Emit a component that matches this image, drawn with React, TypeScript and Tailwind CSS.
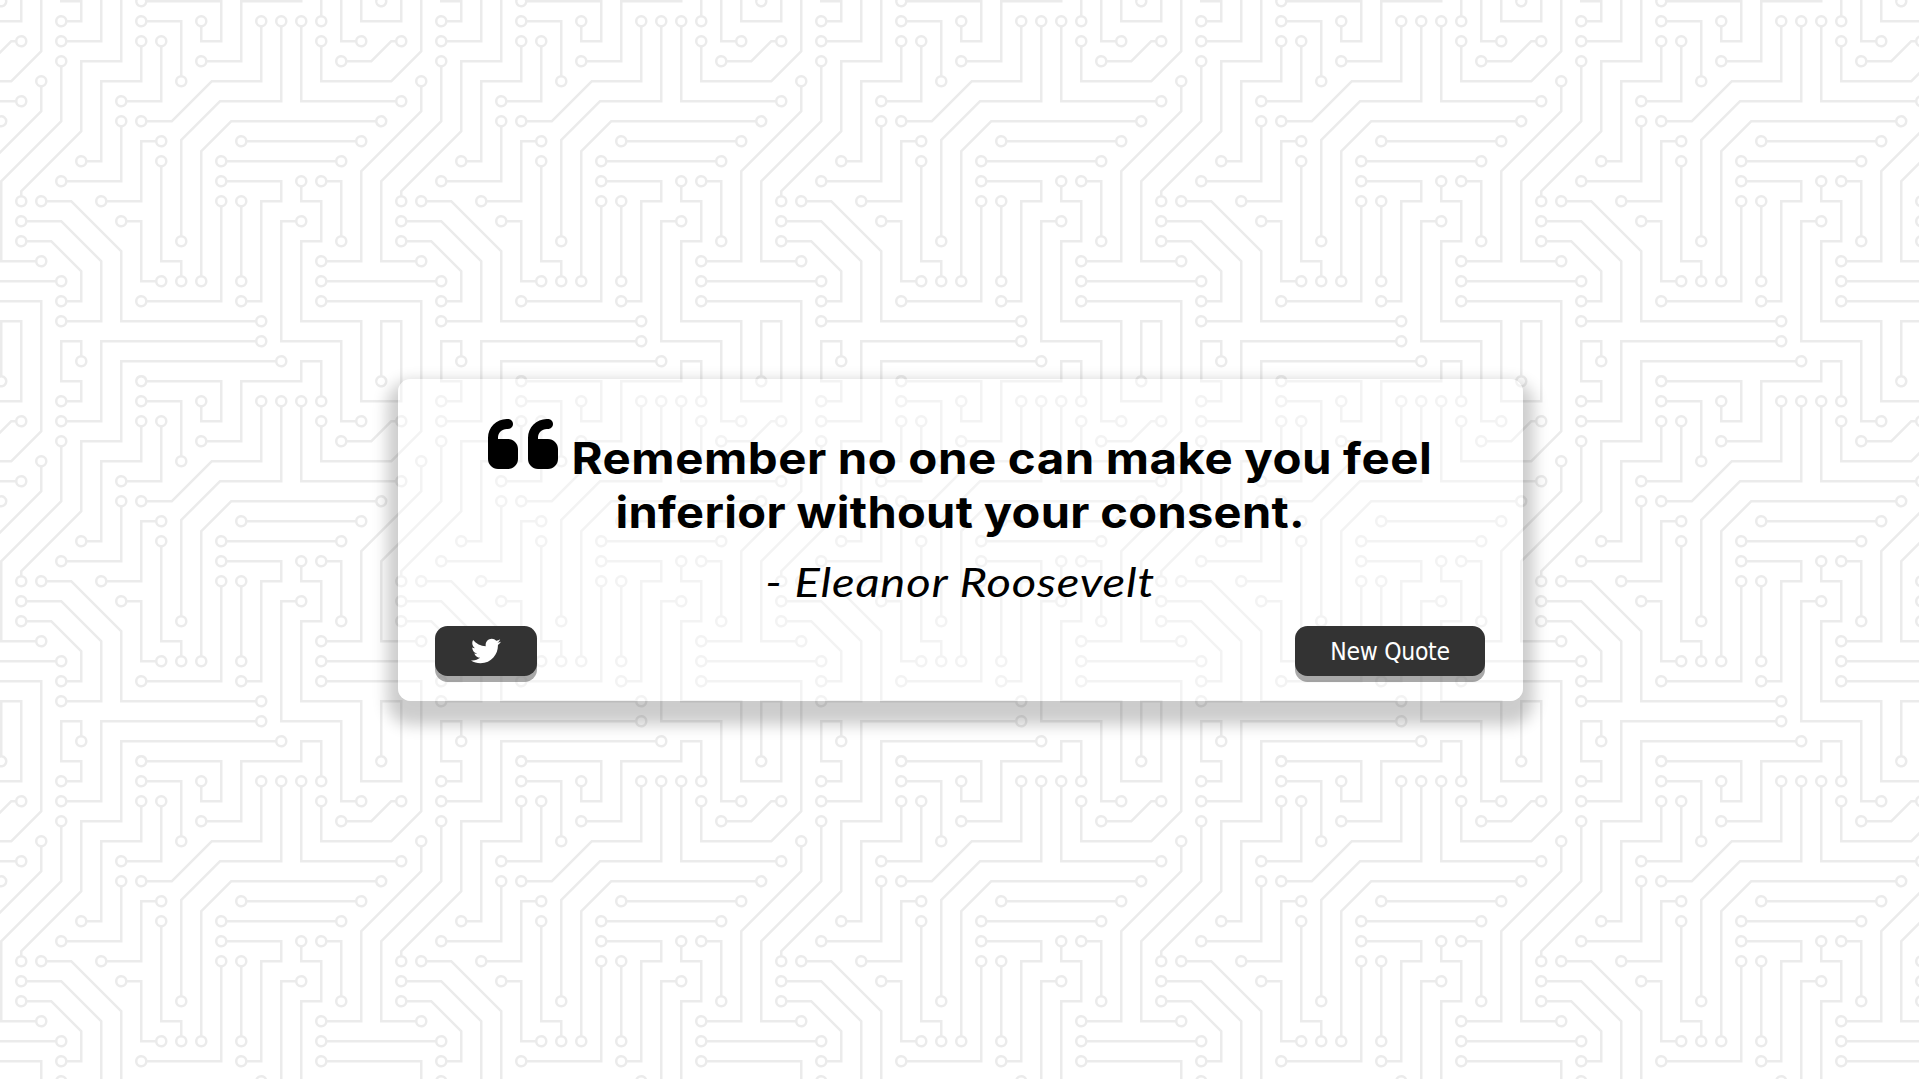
import { FaQuoteLeft, FaTwitter } from "react-icons/fa6";

const TRACES =
  "M44.1 224a5 5 0 1 1 0 2H0v-2h44.1zm160 48a5 5 0 1 1 0 2H82v-2h122.1zm57.8-46a5 5 0 1 1 0-2H304v2h-42.1zm0 16a5 5 0 1 1 0-2H304v2h-42.1zm6.2-114a5 5 0 1 1 0 2h-86.2a5 5 0 1 1 0-2h86.2zm-256-48a5 5 0 1 1 0 2H0v-2h12.1zm185.8 34a5 5 0 1 1 0-2h86.2a5 5 0 1 1 0 2h-86.2zM258 12.1a5 5 0 1 1-2 0V0h2v12.1zm-64 208a5 5 0 1 1-2 0v-54.2a5 5 0 1 1 2 0v54.2zm48-198.2V80h62v2h-64V21.9a5 5 0 1 1 2 0zm16 16V64h46v2h-48V37.9a5 5 0 1 1 2 0zm-128 96V208h16v12.1a5 5 0 1 1-2 0V210h-16v-76.1a5 5 0 1 1 2 0zm-5.9-21.9a5 5 0 1 1 0 2H114v48H85.9a5 5 0 1 1 0-2H112v-48h12.1zm-6.2 130a5 5 0 1 1 0-2H176v-74.1a5 5 0 1 1 2 0V242h-60.1zm-16-64a5 5 0 1 1 0-2H114v48h10.1a5 5 0 1 1 0 2H112v-48h-10.1zM66 284.1a5 5 0 1 1-2 0V274H50v30h-2v-32h18v12.1zM236.1 176a5 5 0 1 1 0 2H226v94h48v32h-2v-30h-48v-98h12.1zm25.8-30a5 5 0 1 1 0-2H274v44.1a5 5 0 1 1-2 0V146h-10.1zm-64 96a5 5 0 1 1 0-2H208v-80h16v-14h-42.1a5 5 0 1 1 0-2H226v18h-16v80h-12.1zm86.2-210a5 5 0 1 1 0 2H272V0h2v32h10.1zM98 101.9V146H53.9a5 5 0 1 1 0-2H96v-42.1a5 5 0 1 1 2 0zM53.9 34a5 5 0 1 1 0-2H80V0h2v34H53.9zm60.1 3.9V66H82v64H69.9a5 5 0 1 1 0-2H80V64h32V37.9a5 5 0 1 1 2 0zM101.9 82a5 5 0 1 1 0-2H128V37.9a5 5 0 1 1 2 0V82h-28.1zm16-64a5 5 0 1 1 0-2H146v44.1a5 5 0 1 1-2 0V18h-26.1zm102.2 270a5 5 0 1 1 0 2H98v14h-2v-16h124.1zM242 149.9V160h16v34h-16v62h48v48h-2v-46h-48v-66h16v-30h-16v-12.1a5 5 0 1 1 2 0zM53.9 18a5 5 0 1 1 0-2H64V2H48V0h18v18H53.9zm112 32a5 5 0 1 1 0-2H192V0h50v2h-48v48h-28.1zm-48-48a5 5 0 0 1-9.8-2h2.07a3 3 0 1 0 5.66 0H178v34h-18V21.9a5 5 0 1 1 2 0V32h14V2h-58.1zm0 96a5 5 0 1 1 0-2H137l32-32h39V21.9a5 5 0 1 1 2 0V66h-40.17l-32 32H117.9zm28.1 90.1a5 5 0 1 1-2 0v-76.51L175.59 80H224V21.9a5 5 0 1 1 2 0V82h-49.59L146 112.41v75.69zm16 32a5 5 0 1 1-2 0v-99.51L184.59 96H300.1a5 5 0 0 1 3.9-3.9v2.07a3 3 0 0 0 0 5.66v2.07a5 5 0 0 1-3.9-3.9H185.41L162 121.41v98.69zm-144-64a5 5 0 1 1-2 0v-3.51l48-48V48h32V0h2v50H66v55.41l-48 48v2.69zM50 53.9v43.51l-48 48V208h26.1a5 5 0 1 1 0 2H0v-65.41l48-48V53.9a5 5 0 1 1 2 0zm-16 16V89.41l-34 34v-2.82l32-32V69.9a5 5 0 1 1 2 0zM12.1 32a5 5 0 1 1 0 2H9.41L0 43.41V40.6L8.59 32h3.51zm265.8 18a5 5 0 1 1 0-2h18.69l7.41-7.41v2.82L297.41 50H277.9zm-16 160a5 5 0 1 1 0-2H288v-71.41l16-16v2.82l-14 14V210h-28.1zm-208 32a5 5 0 1 1 0-2H64v-22.59L40.59 194H21.9a5 5 0 1 1 0-2H41.41L66 216.59V242H53.9zm150.2 14a5 5 0 1 1 0 2H96v-56.6L56.6 162H37.9a5 5 0 1 1 0-2h19.5L98 200.6V256h106.1zm-150.2 2a5 5 0 1 1 0-2H80v-46.59L48.59 178H21.9a5 5 0 1 1 0-2H49.41L82 208.59V258H53.9zM34 39.8v1.61L9.41 66H0v-2h8.59L32 40.59V0h2v39.8zM2 300.1a5 5 0 0 1 3.9 3.9H3.83A3 3 0 0 0 0 302.17V256h18v48h-2v-46H2v42.1zM34 241v63h-2v-62H0v-2h34v1zM17 18H0v-2h16V0h2v18h-1zm273-2h14v2h-16V0h2v16zm-32 273v15h-2v-14h-14v14h-2v-16h18v1zM0 92.1A5.02 5.02 0 0 1 6 97a5 5 0 0 1-6 4.9v-2.07a3 3 0 1 0 0-5.66V92.1zM80 272h2v32h-2v-32zm37.9 32h-2.07a3 3 0 0 0-5.66 0h-2.07a5 5 0 0 1 9.8 0zM5.9 0A5.02 5.02 0 0 1 0 5.9V3.83A3 3 0 0 0 3.83 0H5.9zm294.2 0h2.07A3 3 0 0 0 304 3.83V5.9a5 5 0 0 1-3.9-5.9zm3.9 300.1v2.07a3 3 0 0 0-1.83 1.83h-2.07a5 5 0 0 1 3.9-3.9z";

// Centres of the solder pads; each one gets a hole punched through it.
const PADS = [
  [49, 225], [209, 273], [257, 225], [257, 241], [273, 129], [177, 129], [17, 81],
  [193, 113], [289, 113], [257, 17], [193, 225], [193, 161], [241, 17], [257, 33],
  [129, 129], [145, 225], [129, 113], [81, 161], [113, 241], [177, 161], [97, 177],
  [129, 225], [65, 289], [241, 177], [257, 145], [273, 193], [193, 241], [177, 145],
  [289, 33], [97, 97], [49, 145], [49, 33], [113, 33], [65, 129], [97, 81], [129, 33],
  [113, 17], [145, 65], [225, 289], [241, 145], [49, 17], [161, 49], [161, 17],
  [113, 97], [209, 17], [145, 193], [225, 17], [161, 225], [17, 161], [49, 49],
  [33, 209], [33, 65], [17, 33], [273, 49], [257, 209], [49, 241], [17, 193],
  [209, 257], [33, 161], [49, 257], [17, 177],
];

const holes = PADS.map(([x, y]) => `M${x} ${y + 3}a3 3 0 1 0 0-6 3 3 0 0 0 0 6z`).join("");

const tile = `<svg xmlns="http://www.w3.org/2000/svg" width="380" height="380" viewBox="0 0 304 304"><path fill="#ebebeb" d="${TRACES}${holes}"/></svg>`;

const circuit = { backgroundImage: `url("data:image/svg+xml,${encodeURIComponent(tile)}")` };

export default function App() {
  return (
    <main
      className="flex h-screen w-full items-center justify-center overflow-hidden bg-white pl-[2px]"
      style={circuit}
    >
      <section className="flex h-[322px] w-[1125px] flex-col rounded-[12.5px] bg-white/40 pr-[38px] pl-[37px] pt-[38px] text-black shadow-[0_13px_15px_11px_rgba(0,0,0,0.2)]">
        <h1 className="flex flex-col items-center whitespace-nowrap font-['Inter',sans-serif] text-[43.5px] leading-[54px] font-bold">
          <span className="flex h-[68px] items-end">
            <FaQuoteLeft className="mr-[13px] mb-[1px] h-[80px] w-[70px]" />
            <span className="flex w-[861px] justify-center">
              <span className="scale-x-[1.09] tracking-[0.5px] [word-spacing:-0.8px]">
                Remember no one can make you feel
              </span>
            </span>
          </span>
          <span className="scale-x-[1.08] tracking-[0.3px] [word-spacing:-0.8px]">
            inferior without your consent.
          </span>
        </h1>
        <p className="mt-[19px] text-center font-['Lato',sans-serif] text-[40px] leading-[49px] italic">
          <span className="inline-block scale-x-[1.18] tracking-[0.7px]">- Eleanor Roosevelt</span>
        </p>
        <div className="mt-[19px] flex justify-between">
          <button className="flex h-[50px] w-[102px] items-center justify-center rounded-[12.5px] bg-[#333] text-white shadow-[0_6px_0_rgba(51,51,51,0.42)]">
            <FaTwitter className="size-[30px]" />
          </button>
          <button className="h-[50px] w-[190px] rounded-[12.5px] bg-[#333] pt-[3px] font-['DejaVu_Sans_Condensed','DejaVu_Sans',sans-serif] text-[24.5px] tracking-[-0.3px] text-white shadow-[0_6px_0_rgba(51,51,51,0.42)]">
            New Quote
          </button>
        </div>
      </section>
    </main>
  );
}
